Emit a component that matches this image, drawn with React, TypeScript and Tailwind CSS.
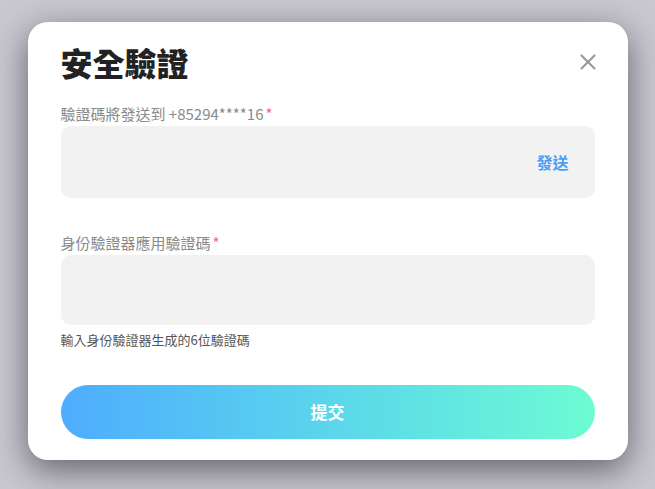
import { X } from "lucide-react";

export default function App() {
  return (
    <div
      className="flex h-[489px] w-full justify-center bg-[#c9c8d0] pt-[22px]"
      style={{ fontFamily: '"Noto Sans CJK TC", "Noto Sans", sans-serif' }}
    >
      <div className="flex h-[438px] w-[600px] flex-col rounded-[20px] bg-white px-[33px] pt-[19px] shadow-[0_10px_34px_rgba(30,30,40,0.6)]">
        <div className="flex items-center justify-between">
          <h1 className="text-[32px] font-black leading-[42px] text-[#222]">安全驗證</h1>
          <button className="-mr-[6px] text-[#9a9a9a]">
            <X className="h-[26px] w-[26px]" strokeWidth={2} />
          </button>
        </div>

        <label className="mt-[21px] text-[15px] leading-[20px] text-[#8a8a8a]">
          驗證碼將發送到 +85294****16<span className="ml-[2px] text-[#f0609a]">*</span>
        </label>
        <div className="mt-[2px] flex h-[72px] items-center justify-end rounded-[10px] bg-[#f2f2f2] pr-[26px]">
          <span className="text-[16px] font-bold text-[#4a9ff5]">發送</span>
        </div>

        <label className="mt-[35px] text-[15px] leading-[20px] text-[#8a8a8a]">
          身份驗證器應用驗證碼<span className="ml-[2px] text-[#f0609a]">*</span>
        </label>
        <div className="mt-[2px] h-[70px] rounded-[10px] bg-[#f2f2f2]" />
        <p className="mt-[6px] text-[13px] leading-[17px] text-[#555]">輸入身份驗證器生成的6位驗證碼</p>

        <button className="mt-[37px] flex h-[54px] items-center justify-center rounded-full bg-gradient-to-r from-[#4facfe] to-[#6dfcd2] text-[17px] font-bold text-white">
          提交
        </button>
      </div>
    </div>
  );
}
